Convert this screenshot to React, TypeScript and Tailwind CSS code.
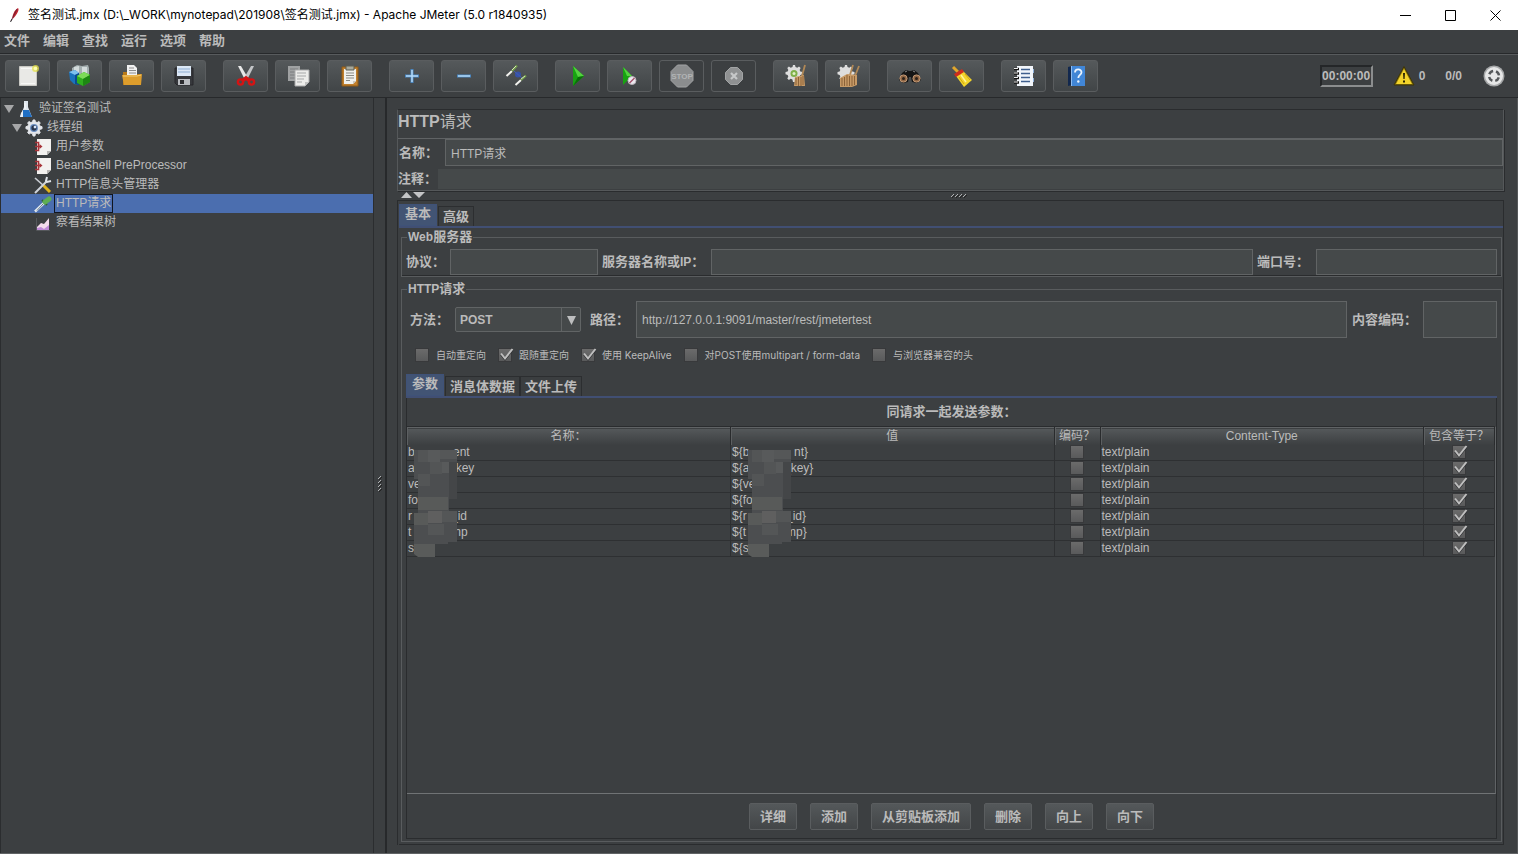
import React, { useState } from 'react'
import clsx from 'clsx'

const GEAR =
  'M9 1h2l.5 2 1.8.8L15 2.6 16.6 4l-1 1.9.7 1.6 2.2.6v2.2l-2.2.6-.7 1.6 1 1.9-1.6 1.5-1.8-1.1-1.7.8L11 18H9l-.6-2.4-1.7-.8-1.8 1.1-1.6-1.5 1-1.9-.7-1.6-2.1-.6V8.1l2.1-.6.7-1.6-1-1.9 1.6-1.4 1.8 1.2L8.5 3z'

const NewIcon: React.FC = () => (
  <svg viewBox="0 0 24 24" className="size-6">
    <path d="M3.5 2.5h17v19h-17z" fill="#e9e9e6" stroke="#c9c9c4" />
    <path d="M5 4h12v1H5zM5 19h14v1H5z" fill="#f8f8f6" />
    <circle cx="19.5" cy="4.5" r="3.5" fill="#e6e14a" opacity=".75" />
    <circle cx="19.5" cy="4.5" r="1.8" fill="#ffffb0" />
  </svg>
)

const TemplatesIcon: React.FC = () => (
  <svg viewBox="0 0 24 24" className="size-6">
    <path d="M4 4l5-3 5 1 6-1 1 3v8L9 14 4 8z" fill="#a3aeaf" />
    <path d="M6 3l5-1v7H6zM14 3h5v7h-5z" fill="#d3dbdb" />
    <path d="M1 8l6-2 4 3v12l-5-1-4-4z" fill="#1b73bd" />
    <path d="M1 8l6-2 4 3-4 2z" fill="#7fc2ee" />
    <path d="M7 11l4-2v12l-4-1z" fill="#0d4c8c" />
    <path d="M9 12l7-4 6 3v7l-7 4-6-3z" fill="#2fae1e" />
    <path d="M9 12l7-4 6 3-7 4z" fill="#7ddb58" />
    <path d="M15 15l7-4v7l-7 4z" fill="#1d8712" />
  </svg>
)

const OpenIcon: React.FC = () => (
  <svg viewBox="0 0 24 24" className="size-6">
    <path d="M3 8h6l2 2h10v11H3z" fill="#b97a17" />
    <path d="M7 1h7l3 3v10H7z" fill="#f1f1f1" />
    <path d="M9 4h5M9 6.5h7M9 9h7" stroke="#8d8d8d" />
    <path d="M2 11h15l5-1-1 11H4z" fill="#dd9d2c" />
    <path d="M3 12h14l4-1" stroke="#f6cd73" fill="none" />
  </svg>
)

const SaveIcon: React.FC = () => (
  <svg viewBox="0 0 24 24" className="size-6">
    <path d="M3 4h18v17H5l-2-2z" fill="#36383c" stroke="#26272a" />
    <path d="M5 2h14v10H5z" fill="#dce8f6" />
    <path d="M6 5h12M6 8h12" stroke="#8faed2" />
    <path d="M6 15h12v6H6z" fill="#b9bcc0" />
    <path d="M8 16h4v4H8z" fill="#2b2c2f" />
  </svg>
)

const CutIcon: React.FC = () => (
  <svg viewBox="0 0 24 24" className="size-6">
    <path d="M4 2h3l7 12-3 2z" fill="#e8e8e8" />
    <path d="M20 2h-3l-7 12 3 2z" fill="#c3c5c7" />
    <circle cx="6.5" cy="18" r="2.6" fill="none" stroke="#d41414" strokeWidth="2.4" />
    <circle cx="17.5" cy="18" r="2.6" fill="none" stroke="#d41414" strokeWidth="2.4" />
    <path d="M8 17l4-3 4 3" stroke="#d41414" strokeWidth="3.5" fill="none" />
  </svg>
)

const CopyIcon: React.FC = () => (
  <svg viewBox="0 0 24 24" className="size-6">
    <path d="M2 2h12v15H2z" fill="#9fa1a2" />
    <path d="M4 5h8M4 8h8M4 11h6M4 14h6" stroke="#7b7d7e" />
    <path d="M9 6h14v12l-4 4H9z" fill="#ececea" stroke="#a9aaab" />
    <path d="M11 9h9M11 12h9M11 15h7M11 18h5" stroke="#a5a7a8" />
    <path d="M23 18h-4v4z" fill="#bfc0c0" />
  </svg>
)

const PasteIcon: React.FC = () => (
  <svg viewBox="0 0 24 24" className="size-6">
    <path d="M4 3h16v19H4z" fill="#c07f2c" stroke="#8f5a16" />
    <path d="M6 5h12v12l-3 3H6z" fill="#f0f0ec" />
    <path d="M8 2h8v4H8z" fill="#a7a89c" stroke="#5d5e55" />
    <path d="M8 9h8M8 11.5h8M8 14h8M8 16.5h4" stroke="#8b8b86" />
    <path d="M18 17h-3v3z" fill="#c8c8c2" />
  </svg>
)

const PlusIcon: React.FC = () => (
  <svg viewBox="0 0 24 24" className="size-6">
    <path d="M5 12h14M12 5v14" stroke="#4a86c0" strokeWidth="3" />
    <path d="M6 12h12M12 6v12" stroke="#b5daf7" strokeWidth="1.5" />
  </svg>
)

const MinusIcon: React.FC = () => (
  <svg viewBox="0 0 24 24" className="size-6">
    <path d="M5 12h14" stroke="#4a86c0" strokeWidth="3" />
    <path d="M6 12h12" stroke="#b5daf7" strokeWidth="1.5" />
  </svg>
)

const ToggleIcon: React.FC = () => (
  <svg viewBox="0 0 24 24" className="size-6">
    <path d="M2.5 12L8 7M11.5 21L17 16" stroke="#f2f2ee" strokeWidth="2" />
    <path d="M8 7l5-5.5M17 16l5-4.5" stroke="#6f9a4b" strokeWidth="2.2" />
    <path d="M8 6l4-4M17 15l4-3" stroke="#d5e6b5" />
    <circle cx="14" cy="10.5" r="3" fill="#3651a8" />
    <path d="M10 7l8 7" stroke="#4360b4" />
  </svg>
)

const StartIcon: React.FC = () => (
  <svg viewBox="0 0 24 24" className="size-6">
    <path d="M7 2l11 10L7 22z" fill="#18a212" />
    <path d="M7 2l11 10-6 1z" fill="#53d33f" />
    <path d="M7 22l11-10-6 1z" fill="#0a6f0a" />
  </svg>
)

const StartNoPausesIcon: React.FC = () => (
  <svg viewBox="0 0 24 24" className="size-6">
    <path d="M5 3l9 9-9 9z" fill="#18a212" />
    <path d="M5 3l9 9H9z" fill="#53d33f" />
    <circle cx="14" cy="16.5" r="4" fill="#eceaf0" stroke="#b9b2bb" />
    <path d="M11.5 19l5-5" stroke="#a3506a" strokeWidth="1.5" />
  </svg>
)

const StopIcon: React.FC = () => (
  <svg viewBox="0 0 24 24" className="size-6">
    <path d="M7.5 1h9L23 7.5v9L16.5 23h-9L1 16.5v-9z" fill="#8b8d8e" stroke="#a2a4a5" />
    <text
      x="12"
      y="15"
      textAnchor="middle"
      fontFamily="Liberation Sans, sans-serif"
      fontSize="8"
      fontWeight="700"
      fill="#b2b4b5"
    >
      STOP
    </text>
  </svg>
)

const ShutdownIcon: React.FC = () => (
  <svg viewBox="0 0 24 24" className="size-6">
    <path d="M8.5 3.5h7l5 5v7l-5 5h-7l-5-5v-7z" fill="#8f9192" stroke="#a2a4a5" />
    <path d="M9 9l6 6M15 9l-6 6" stroke="#c6c8c9" strokeWidth="2.2" />
  </svg>
)

const ClearIcon: React.FC = () => (
  <svg viewBox="0 0 24 24" className="size-6">
    <path d={GEAR} fill="#dedede" />
    <circle cx="10" cy="9.5" r="3.5" fill="#7fb04b" />
    <circle cx="10" cy="9.5" r="1.5" fill="#e0efc4" />
    <path d="M21 1l-3 11" stroke="#b08856" strokeWidth="1.8" />
    <path d="M11 13l9-2 1 11H10z" fill="#c79a66" />
    <path d="M12 14v7M14.5 13v9M17 13v9M19 12v9" stroke="#8b6238" />
  </svg>
)

const ClearAllIcon: React.FC = () => (
  <svg viewBox="0 0 24 24" className="size-6">
    <path d={GEAR} fill="#dedede" />
    <path d="M17 1l-3 10M23 2l-4 10" stroke="#b08856" strokeWidth="1.8" />
    <path d="M4 14l7-4 10 1v10l-5 2H4z" fill="#c79a66" />
    <path d="M6 14v8M8.5 13v9M11 11v11M13.5 12v10M16 12v10M18.5 12v9" stroke="#8b6238" />
  </svg>
)

const SearchIcon: React.FC = () => (
  <svg viewBox="0 0 24 24" className="size-6">
    <path d="M4 9l4-3 3 1h2l3-1 4 3 3 7-4 3-5-1-1-5h-2l-1 5-5 1-4-3z" fill="#151515" />
    <circle cx="5.5" cy="14.5" r="3.6" fill="#8e6544" stroke="#c39a77" />
    <circle cx="18.5" cy="14.5" r="3.6" fill="#8e6544" stroke="#c39a77" />
    <circle cx="5.5" cy="14.5" r="1.5" fill="#2b211a" />
    <circle cx="18.5" cy="14.5" r="1.5" fill="#2b211a" />
    <path d="M7 8l2-1M15 7l2 1" stroke="#8a8a8a" />
  </svg>
)

const BroomIcon: React.FC = () => (
  <svg viewBox="0 0 24 24" className="size-6">
    <path d="M3 3l5 5" stroke="#e0a62c" strokeWidth="3" />
    <path d="M6 12l7-5 9 9-8 7z" fill="#f3d62a" />
    <path d="M4 10l8-5 2 3-8 5z" fill="#cf2d1c" />
    <path d="M9 13l5 7M15 10l5 6" stroke="#cfa514" />
    <path d="M11 11l5 7" stroke="#fff39a" strokeWidth="1.5" />
  </svg>
)

const FunctionIcon: React.FC = () => (
  <svg viewBox="0 0 24 24" className="size-6">
    <path d="M5 2h16v20H5z" fill="#f2f6fb" />
    <path d="M9 5.5h9M9 9.5h9M9 13.5h9M9 17.5h9" stroke="#3f5f8e" strokeWidth="1.5" />
    <path d="M2 5h5M2 9.5h5M2 14h5M2 18.5h5" stroke="#111" strokeWidth="2.5" />
    <path d="M2 4.5h4M2 9h4M2 13.5h4M2 18h4" stroke="#ececec" />
    <path d="M21 5h1v4h-1zM21 14h1v4h-1z" fill="#8fb2dc" />
  </svg>
)

const HelpIcon: React.FC = () => (
  <svg viewBox="0 0 24 24" className="size-6">
    <path d="M4 3l4-1v19l-4 1z" fill="#12284e" />
    <path d="M7 2h14v20H7z" fill="#4186d6" />
    <path d="M7 2h1v20H7z" fill="#8fbdf0" />
    <path d="M11 8.5c0-4 6.5-4 6.5-.2 0 2.7-3.2 2.6-3.2 5.7" fill="none" stroke="#eaf3fd" strokeWidth="1.8" />
    <circle cx="14.3" cy="17.5" r="1.2" fill="#eaf3fd" />
  </svg>
)

const WarningIcon: React.FC = () => (
  <svg viewBox="0 0 22 22" className="size-[22px]">
    <path d="M11 1.5L21 20H1z" fill="#8c760c" stroke="#3d3507" strokeLinejoin="round" />
    <path d="M11 4l8 15H3z" fill="#f3d42a" />
    <path d="M10 8h2l-.4 6h-1.2zM10 15.500h2v2h-2z" fill="#2a2400" />
  </svg>
)

const RunningIcon: React.FC = () => (
  <svg viewBox="0 0 22 22" className="size-[22px]">
    <circle cx="11" cy="11" r="10.5" fill="#a5a7a8" />
    <circle cx="11" cy="11" r="9" fill="#e6e7e7" />
    <circle
      cx="11"
      cy="11"
      r="5"
      fill="none"
      stroke="#55585a"
      strokeWidth="2.5"
      strokeDasharray="4.85 3"
      strokeDashoffset="-1.5"
    />
  </svg>
)

const FeatherIcon: React.FC = () => (
  <svg viewBox="0 0 16 16" className="size-4">
    <path d="M12 1c1 1 .5 3-1 5.5S8 11 6.5 12C6 9 8 3 12 1z" fill="#c2262e" />
    <path d="M11 2L5 14" stroke="#5b1d39" strokeWidth=".8" />
    <path d="M6 12l-1.5 3" stroke="#333" />
  </svg>
)

const FlaskIcon: React.FC = () => (
  <svg viewBox="0 0 18 18" className="size-[18px]">
    <path d="M7 1h4v6l4 10H3L7 7z" fill="#dfe7ee" />
    <path d="M6 10h6l3 7H3z" fill="#1f6fc4" />
    <path d="M4 13l2-3v7H3z" fill="#e8eef4" />
    <path d="M8 3v6" stroke="#fff" />
  </svg>
)

const GearIcon: React.FC = () => (
  <svg viewBox="1 0 18 19" className="size-[18px]">
    <path d={GEAR} fill="#e3e6ea" stroke="#e3e6ea" />
    <circle cx="10" cy="9.5" r="4.2" fill="#6c8fc2" />
    <circle cx="10" cy="9.5" r="2.8" fill="#27344b" />
    <circle cx="11" cy="8.5" r="1.4" fill="#dce8fa" />
  </svg>
)

const PreProcessorIcon: React.FC = () => (
  <svg viewBox="0 0 18 18" className="size-[18px]">
    <path d="M3 1h14v12l-4 4H3z" fill="#f3f1ef" />
    <path d="M17 13h-4v4z" fill="#b5b3b1" />
    <path d="M1 4.5h3.5v8H1M1 8.5h6" stroke="#a83238" strokeWidth="1.6" fill="none" />
    <path d="M5.5 6l3 2.500-3 2.500z" fill="#a83238" />
  </svg>
)

const ToolsIcon: React.FC = () => (
  <svg viewBox="0 0 18 18" className="size-[18px]">
    <path d="M1 2l9 8" stroke="#c9cdd2" strokeWidth="1.6" />
    <path d="M9 9l7 7" stroke="#e0b31c" strokeWidth="3" />
    <path d="M1 17L13 5" stroke="#cfd4da" strokeWidth="2" />
    <path d="M13 1l-1 4 1 1 4-1" fill="none" stroke="#dfe3e8" strokeWidth="2" />
  </svg>
)

const SamplerIcon: React.FC = () => (
  <svg viewBox="0 0 18 18" className="size-[18px]">
    <path d="M1 16.5L10 8" stroke="#e3eaf0" strokeWidth="2.5" />
    <path d="M3 15.5L9 9" stroke="#5d7489" />
    <path d="M8 5l5 5" stroke="#2e5e33" strokeWidth="2" />
    <path d="M11 7l4-3" stroke="#5fae52" strokeWidth="5" strokeLinecap="round" />
  </svg>
)

const ListenerIcon: React.FC = () => (
  <svg viewBox="0 0 18 18" className="size-[18px]">
    <path d="M2.5 4v12.5H16" stroke="#55585b" fill="none" />
    <path d="M3 16v-3l4-4 3 1 5-6v12z" fill="#f3dcec" />
    <path d="M3 16v-2l4-1 3 2 5-4v5z" fill="#c08bd8" />
  </svg>
)

type ToolButton = { label: string; icon: React.FC; disabled?: boolean }

const toolGroups: ToolButton[][] = [
  [
    { label: '新建', icon: NewIcon },
    { label: '模板', icon: TemplatesIcon },
    { label: '打开', icon: OpenIcon },
    { label: '保存', icon: SaveIcon },
  ],
  [
    { label: '剪切', icon: CutIcon },
    { label: '复制', icon: CopyIcon },
    { label: '粘贴', icon: PasteIcon },
  ],
  [
    { label: '展开', icon: PlusIcon },
    { label: '折叠', icon: MinusIcon },
    { label: '切换', icon: ToggleIcon },
  ],
  [
    { label: '启动', icon: StartIcon },
    { label: '不停顿开始', icon: StartNoPausesIcon },
    { label: '停止', icon: StopIcon, disabled: true },
    { label: '关闭', icon: ShutdownIcon, disabled: true },
  ],
  [
    { label: '清除', icon: ClearIcon },
    { label: '清除全部', icon: ClearAllIcon },
  ],
  [
    { label: '查找', icon: SearchIcon },
    { label: '重置搜索', icon: BroomIcon },
  ],
  [
    { label: '函数助手', icon: FunctionIcon },
    { label: '帮助', icon: HelpIcon },
  ],
]

const menus = ['文件', '编辑', '查找', '运行', '选项', '帮助']

type TreeNode = { label: string; icon: React.FC; level: 0 | 1 | 2 }

const treeNodes: TreeNode[] = [
  { label: '验证签名测试', icon: FlaskIcon, level: 0 },
  { label: '线程组', icon: GearIcon, level: 1 },
  { label: '用户参数', icon: PreProcessorIcon, level: 2 },
  { label: 'BeanShell PreProcessor', icon: PreProcessorIcon, level: 2 },
  { label: 'HTTP信息头管理器', icon: ToolsIcon, level: 2 },
  { label: 'HTTP请求', icon: SamplerIcon, level: 2 },
  { label: '察看结果树', icon: ListenerIcon, level: 2 },
]

const levelClasses: Record<number, string> = {
  0: 'pl-[3px]',
  1: 'pl-[11px]',
  2: 'pl-[33px]',
}

// start and end stay readable, the middle is masked
const params = [
  { start: 'b', nameEnd: 'ent', valueEnd: 'nt}', nameWidth: 'w-[45px]', valueWidth: 'w-[62px]' },
  { start: 'a', nameEnd: '_key', valueEnd: '_key}', nameWidth: 'w-[41px]', valueWidth: 'w-[52px]' },
  { start: 've', nameEnd: '', valueEnd: '', nameWidth: 'w-[41px]', valueWidth: 'w-[52px]' },
  { start: 'fo', nameEnd: '', valueEnd: '', nameWidth: 'w-[41px]', valueWidth: 'w-[52px]' },
  { start: 'r', nameEnd: '_id', valueEnd: '_id}', nameWidth: 'w-[43px]', valueWidth: 'w-[54px]' },
  { start: 't', nameEnd: 'mp', valueEnd: 'mp}', nameWidth: 'w-[43px]', valueWidth: 'w-[54px]' },
  { start: 's', nameEnd: '', valueEnd: '', nameWidth: 'w-[41px]', valueWidth: 'w-[52px]' },
]

const httpOptions = [
  { label: '自动重定向', checked: false },
  { label: '跟随重定向', checked: true },
  { label: '使用 KeepAlive', checked: true },
  { label: '对POST使用multipart / form-data', checked: false },
  { label: '与浏览器兼容的头', checked: false },
]

const tableActions = ['详细', '添加', '从剪贴板添加', '删除', '向上', '向下']

const fieldClasses =
  'min-w-0 border border-[#616465] bg-[#45494a] px-[5px] text-xs text-[#bbbbbb] outline-none focus:border-[#466d94]'
const boldClasses = 'text-[13px] leading-[14px] font-bold whitespace-nowrap'
const headCell = 'border-r border-[#292b2d] shadow-[inset_1px_0_0_#5c5f61] p-0 font-normal'
const bodyCell = 'border-r border-b border-[#2e3032] p-0'

const Mosaic: React.FC<{ className?: string }> = ({ className }) => (
  <svg viewBox="0 0 50 112" className={className} aria-hidden="true">
    <path d="M0 16V5h43v12h-1v37h-7v12h8v31h-9v2H0V68h4V34H0z" fill="#4c4e50" />
    <path d="M4 5h10v12H4zM16 17h12v12H16zM4 29h12v12H4z" fill="#535556" />
    <path d="M14 5h12v12H14zM28 17h7v11h-7z" fill="#585a5b" />
    <path d="M26 5h17v9H26z" fill="#555758" />
    <path d="M4 52h30v13H4zM0 68h14v12H0z" fill="#585a59" />
    <path d="M14 66h14v12H14z" fill="#5f5f5f" />
    <path d="M28 66h15v11H28zM14 79h16v11H14z" fill="#545657" />
    <path d="M35 17h8v37h-8z" fill="#444648" />
    <path d="M0 99h21v13H4l-4-3z" fill="#595b5a" />
  </svg>
)

const CheckBox: React.FC<{ id?: string; label?: string; checked: boolean }> = ({ id, label, checked }) => (
  <span className="relative inline-block size-[14px] shrink-0">
    <input
      id={id}
      type="checkbox"
      aria-label={label}
      defaultChecked={checked}
      className="peer block size-[14px] appearance-none border border-[#38393b] bg-linear-to-b from-[#6b6b6b] to-[#595a5b]"
    />
    <svg
      viewBox="0 0 16 14"
      className="pointer-events-none absolute top-0 left-0 hidden h-[14px] w-4 peer-checked:block"
    >
      <path d="M3 6.5l4 5L14.500 2" fill="none" stroke="#2d2f31" strokeWidth="2" />
      <path d="M3 5.5l4 5L14.500 1" fill="none" stroke="#bfbfbf" strokeWidth="2" />
    </svg>
  </span>
)

type TabsProps = { tabs: string[]; active: string; onSelect: (tab: string) => void }

const Tabs: React.FC<TabsProps> = ({ tabs, active, onSelect }) => (
  <div role="tablist" className="flex h-6 items-end border-b-2 border-[#414f73]">
    {tabs.map((tab) => (
      <button
        key={tab}
        type="button"
        role="tab"
        aria-selected={tab === active}
        onClick={() => onSelect(tab)}
        className={clsx(
          boldClasses,
          'border',
          tab === active
            ? 'mr-px h-[22px] border-[#3f5278] bg-[#425474] px-[5px] pb-[2px]'
            : 'h-5 border-b-0 border-[#2c2e30] bg-[#3b3e40] px-1'
        )}
      >
        {tab}
      </button>
    ))}
  </div>
)

const TitleBar: React.FC = () => (
  <header className="flex h-[30px] shrink-0 items-center bg-white pl-[6px] font-['Inter','Noto_Sans_CJK_SC',sans-serif] text-xs text-black">
    <FeatherIcon />
    <h1 className="ml-[6px] flex-1 whitespace-nowrap">
      签名测试.jmx (D:\_WORK\mynotepad\201908\签名测试.jmx) - Apache JMeter (5.0 r1840935)
    </h1>
    <button type="button" aria-label="最小化" className="flex h-full w-[45px] items-center justify-center">
      <svg viewBox="0 0 11 11" className="size-[11px]">
        <path d="M0 5.5h11" stroke="#000" />
      </svg>
    </button>
    <button type="button" aria-label="最大化" className="flex h-full w-[45px] items-center justify-center">
      <svg viewBox="0 0 11 11" className="size-[11px]">
        <path d="M.5.5h10v10H.5z" fill="none" stroke="#000" />
      </svg>
    </button>
    <button type="button" aria-label="关闭窗口" className="flex h-full w-[45px] items-center justify-center">
      <svg viewBox="0 0 11 11" className="size-[11px]">
        <path d="M.5.5l10 10M10.5.5l-10 10" stroke="#000" />
      </svg>
    </button>
  </header>
)

const Toolbar: React.FC = () => (
  <div className="flex h-11 shrink-0 items-center border-t border-b border-t-[#585b5d] border-b-[#27292b] px-[5px]">
    <div className="flex gap-[17px]">
      {toolGroups.map((group, i) => (
        <div key={i} className="flex gap-[7px]">
          {group.map(({ label, icon: Icon, disabled }) => (
            <button
              key={label}
              type="button"
              aria-label={label}
              disabled={disabled}
              className={clsx(
                'flex h-8 w-[45px] items-center justify-center rounded-[3px] border border-[#5a5d5f]',
                !disabled && 'bg-linear-to-b from-[#55595b] to-[#414547]'
              )}
            >
              <Icon />
            </button>
          ))}
        </div>
      ))}
    </div>
    <div className="ml-auto flex items-center pr-[8px] text-xs font-bold">
      <span className="flex h-[22px] w-[53px] items-center justify-center border-2 border-t-[#242628] border-r-[#8b8d8e] border-b-[#8b8d8e] border-l-[#242628]">
        00:00:00
      </span>
      <span className="ml-5 flex items-center gap-1">
        <WarningIcon />0
      </span>
      <span className="mr-[21px] ml-5">0/0</span>
      <RunningIcon />
    </div>
  </div>
)

const TestTree: React.FC = () => {
  const [selected, setSelected] = useState('HTTP请求')
  return (
    <nav className="w-[374px] shrink-0 border-r border-l border-[#2b2d2f] pt-px">
      <ul>
        {treeNodes.map(({ label, icon: Icon, level }) => (
          <li key={label}>
            <button
              type="button"
              onClick={() => setSelected(label)}
              className={clsx(
                'flex h-[19px] w-full items-center text-xs whitespace-nowrap',
                levelClasses[level],
                label === selected && 'bg-[#4b6eaf]'
              )}
            >
              {level < 2 && (
                <svg viewBox="0 0 10 8" className="mr-[3px] h-2 w-[10px]">
                  <path d="M0 0h10L5 8z" fill="#a6a7a8" />
                </svg>
              )}
              <Icon />
              <span
                className={clsx(
                  'ml-[2px] border px-px leading-[17px]',
                  label === selected ? 'border-[#10151f]' : 'border-transparent'
                )}
              >
                {label}
              </span>
            </button>
          </li>
        ))}
      </ul>
    </nav>
  )
}

const ParamsTable: React.FC = () => (
  <table className="w-full table-fixed border-collapse text-xs leading-[15px]">
    <colgroup>
      <col />
      <col />
      <col className="w-[46px]" />
      <col />
      <col className="w-[71px]" />
    </colgroup>
    <thead>
      <tr className="h-[17px] border-t border-[#606365] bg-linear-to-b from-[#54585a] to-[#3c3f41] leading-[14px]">
        <th className={headCell}>名称：</th>
        <th className={headCell}>值</th>
        <th className={headCell}>编码？</th>
        <th className={headCell}>Content-Type</th>
        <th className={clsx(headCell, 'whitespace-nowrap')}>包含等于？</th>
      </tr>
    </thead>
    <tbody>
      {params.map((param, i) => (
        <tr key={param.start} className="h-4">
          <td className={clsx(bodyCell, 'relative')}>
            <div className="flex h-[15px] pl-px">
              <span className={param.nameWidth}>{param.start}</span>
              {param.nameEnd}
            </div>
            {i === 0 && <Mosaic className="absolute top-0 left-[7px] z-10 h-28 w-[50px]" />}
          </td>
          <td className={clsx(bodyCell, 'relative')}>
            <div className="flex h-[15px] pl-px">
              <span className={param.valueWidth}>{'${' + param.start}</span>
              {param.valueEnd}
            </div>
            {i === 0 && <Mosaic className="absolute top-0 left-[17px] z-10 h-28 w-[50px]" />}
          </td>
          <td className={bodyCell}>
            <div className="flex h-[15px] justify-center">
              <CheckBox label={`编码 ${i + 1}`} checked={false} />
            </div>
          </td>
          <td className={bodyCell}>
            <div className="h-[15px] pl-px">text/plain</div>
          </td>
          <td className={bodyCell}>
            <div className="flex h-[15px] justify-center">
              <CheckBox label={`包含等于 ${i + 1}`} checked />
            </div>
          </td>
        </tr>
      ))}
    </tbody>
  </table>
)

const HttpRequestPanel: React.FC = () => {
  const [tab, setTab] = useState('基本')
  const [bodyTab, setBodyTab] = useState('参数')

  return (
    <main className="flex min-w-0 flex-1 flex-col border-r border-l-2 border-r-[#55585a] border-l-[#27292b] pt-[11px] pr-[13px] pb-2 pl-[10px]">
      <section className="border border-[#55585a] border-t-[#2a2c2e] shadow-[1px_1px_0_#2a2c2e]">
        <h2 className="flex h-[29px] items-center border-b border-[#606365] pb-[5px] text-base font-bold">
          HTTP<span className="font-normal">请求</span>
        </h2>
        <div className="flex items-center pl-px">
          <label htmlFor="name" className={clsx(boldClasses, 'w-[46px]')}>
            名称：
          </label>
          <input id="name" defaultValue="HTTP请求" className={clsx(fieldClasses, 'h-[27px] flex-1')} />
        </div>
        <div className="flex items-center pt-[3px] pb-px">
          <label htmlFor="comment" className={clsx(boldClasses, 'w-10')}>
            注释：
          </label>
          <input id="comment" className="h-5 min-w-0 flex-1 bg-[#45494a] px-1 text-xs outline-none" />
        </div>
      </section>

      <div className="relative flex h-[10px] items-center justify-center border-b border-[#2a2c2e] pl-4">
        <svg viewBox="0 0 24 6" className="absolute top-px left-1 h-[6px] w-6">
          <path d="M0 6h11L5.5 0zM12 0h12l-6 6z" fill="#c4c5c6" />
        </svg>
        <svg viewBox="0 0 16 6" className="h-[6px] w-4">
          <path d="M0 4l3-3M4 4l3-3M8 4l3-3M12 4l3-3" stroke="#b0b2b3" />
          <path d="M1 5l3-3M5 5l3-3M9 5l3-3M13 5l3-3" stroke="#222" />
        </svg>
      </div>

      <div className="flex min-h-0 flex-1 flex-col border-x border-[#2a2c2e] pt-[3px] pl-px">
        <Tabs tabs={['基本', '高级']} active={tab} onSelect={setTab} />
        <div className="flex min-h-0 flex-1 flex-col border-b border-[#2a2c2e] pt-px pr-px pb-[2px] pl-[2px]">
          <fieldset className="min-w-0 border border-[#595c5e] px-1 pt-1 pb-px shadow-[inset_0_-1px_0_#2a2c2e]">
            <legend className={clsx(boldClasses, 'ml-px px-px')}>
              <span className="text-xs">Web</span>服务器
            </legend>
            <div className="flex items-center gap-1">
              <label htmlFor="protocol" className={clsx(boldClasses, 'w-10')}>
                协议：
              </label>
              <input id="protocol" className={clsx(fieldClasses, 'h-[26px] w-[148px]')} />
              <label htmlFor="server" className={clsx(boldClasses, 'w-[105px]')}>
                服务器名称或<span className="text-xs">IP</span>：
              </label>
              <input id="server" className={clsx(fieldClasses, 'h-[26px] flex-1')} />
              <label htmlFor="port" className={clsx(boldClasses, 'w-[55px]')}>
                端口号：
              </label>
              <input id="port" className={clsx(fieldClasses, 'h-[26px] w-[181px]')} />
            </div>
          </fieldset>

          <fieldset className="mt-1 flex min-h-0 min-w-0 flex-1 flex-col border border-[#595c5e] px-1 pt-1 pb-[2px]">
            <legend className={clsx(boldClasses, 'ml-px px-px')}>
              <span className="text-xs">HTTP</span>请求
            </legend>
            <div className="flex items-center pl-1">
              <label htmlFor="method" className={clsx(boldClasses, 'w-[45px]')}>
                方法：
              </label>
              <div className="relative">
                <select
                  id="method"
                  defaultValue="POST"
                  className="block h-[25px] w-[126px] appearance-none rounded-[2px] border border-[#616465] bg-[#45494a] px-1 text-xs font-bold"
                >
                  <option>GET</option>
                  <option>POST</option>
                  <option>PUT</option>
                  <option>DELETE</option>
                </select>
                <svg viewBox="0 0 20 25" className="pointer-events-none absolute top-0 right-0 h-[25px] w-5">
                  <path d="M.5 1v23" stroke="#616465" />
                  <path d="M6 9h9l-4.5 9z" fill="#bdbebf" />
                </svg>
              </div>
              <label htmlFor="path" className={clsx(boldClasses, 'ml-[9px] w-[46px]')}>
                路径：
              </label>
              <input
                id="path"
                defaultValue="http://127.0.0.1:9091/master/rest/jmetertest"
                className={clsx(fieldClasses, 'h-[37px] flex-1')}
              />
              <label htmlFor="encoding" className={clsx(boldClasses, 'ml-[5px] w-[71px]')}>
                内容编码：
              </label>
              <input id="encoding" className={clsx(fieldClasses, 'h-[37px] w-[74px]')} />
            </div>

            <div className="mt-[10px] flex gap-3 pl-[9px]">
              {httpOptions.map(({ label, checked }, i) => (
                <div key={label} className="flex items-center gap-[7px]">
                  <CheckBox id={`option-${i}`} checked={checked} />
                  <label
                    htmlFor={`option-${i}`}
                    className="font-['Inter','Noto_Sans_CJK_SC',sans-serif] text-[10px] leading-[14px] whitespace-nowrap"
                  >
                    {label}
                  </label>
                </div>
              ))}
            </div>

            <div className="mt-3 flex min-h-0 flex-1 flex-col">
              <Tabs tabs={['参数', '消息体数据', '文件上传']} active={bodyTab} onSelect={setBodyTab} />
              <div className="flex min-h-0 flex-1 flex-col border border-t-0 border-[#2a2c2e]">
                <p className={clsx(boldClasses, 'py-[7px] text-center')}>同请求一起发送参数：</p>
                <div className="min-h-0 flex-1 border-t border-r border-b border-t-[#2a2c2e] border-r-[#606365] border-b-[#707375]">
                  <ParamsTable />
                </div>
                <div className="flex justify-center gap-[13px] pt-[9px] pb-2">
                  {tableActions.map((action) => (
                    <button
                      key={action}
                      type="button"
                      className={clsx(
                        boldClasses,
                        'h-[27px] rounded-[2px] border border-[#5a5d5f] bg-linear-to-b from-[#54585a] to-[#434648] px-[10px]'
                      )}
                    >
                      {action}
                    </button>
                  ))}
                </div>
              </div>
            </div>
          </fieldset>
        </div>
      </div>
    </main>
  )
}

const App: React.FC = () => (
  <div className="flex h-screen flex-col overflow-hidden bg-[#3c3f41] font-['Liberation_Sans','Noto_Sans_CJK_SC',sans-serif] text-[#bbbbbb]">
    <TitleBar />
    <div role="menubar" className="flex h-6 shrink-0 gap-[13px] border-b border-[#27292b] pb-px pl-1">
      {menus.map((menu) => (
        <button key={menu} type="button" role="menuitem" className={boldClasses}>
          {menu}
        </button>
      ))}
    </div>
    <Toolbar />
    <div className="flex min-h-0 flex-1 border-b border-[#606365]">
      <TestTree />
      <div className="flex w-[11px] shrink-0 items-center justify-center pt-4">
        <svg viewBox="0 0 6 16" className="h-4 w-[6px]">
          <path d="M1 3l3-3M1 7l3-3M1 11l3-3M1 15l3-3" stroke="#b0b2b3" />
          <path d="M2 4l3-3M2 8l3-3M2 12l3-3M2 16l3-3" stroke="#222" />
        </svg>
      </div>
      <HttpRequestPanel />
    </div>
  </div>
)

export default App
